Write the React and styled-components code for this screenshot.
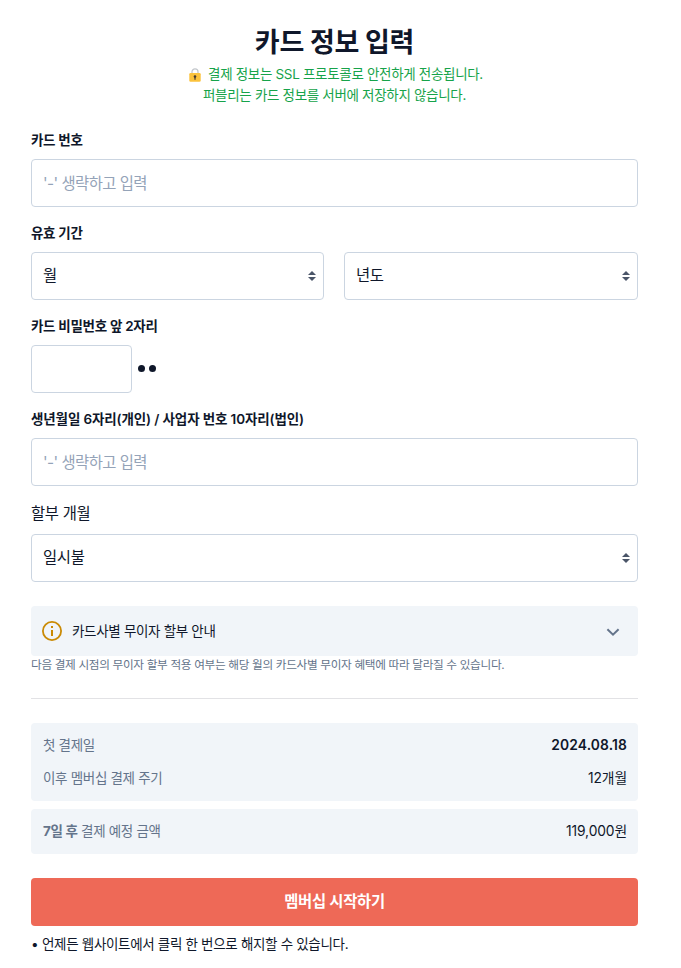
import React, { useState } from "react";
import { styled, createGlobalStyle } from "styled-components";

const App = () => {
  const [cardNumber, setCardNumber] = useState("");
  const [password, setPassword] = useState("");
  const [identity, setIdentity] = useState("");

  return (
    <>
      <GlobalStyle />
      <Wrapper>
        <Title>카드 정보 입력</Title>
        <Secure>
          <SecureLine $icon>
            <LockIcon />
            결제 정보는 SSL 프로토콜로 안전하게 전송됩니다.
          </SecureLine>
          <SecureLine>퍼블리는 카드 정보를 서버에 저장하지 않습니다.</SecureLine>
        </Secure>

        <Form>
          <Field>
            <Label>카드 번호</Label>
            <Input
              placeholder="'-' 생략하고 입력"
              value={cardNumber}
              onChange={(e) => setCardNumber(e.target.value)}
            />
          </Field>

          <Field>
            <Label>유효 기간</Label>
            <Columns>
              <SelectBox options={["월"]} />
              <SelectBox options={["년도"]} />
            </Columns>
          </Field>

          <Field>
            <Label>카드 비밀번호 앞 2자리</Label>
            <PasswordRow>
              <Input
                type="password"
                $width="101px"
                maxLength={2}
                value={password}
                onChange={(e) => setPassword(e.target.value)}
              />
              <Dot />
              <Dot />
            </PasswordRow>
          </Field>

          <Field>
            <Label $wide>생년월일 6자리(개인) / 사업자 번호 10자리(법인)</Label>
            <Input
              placeholder="'-' 생략하고 입력"
              value={identity}
              onChange={(e) => setIdentity(e.target.value)}
            />
          </Field>

          <Field>
            <Label $large>할부 개월</Label>
            <SelectBox options={["일시불"]} />
          </Field>
        </Form>

        <Guide type="button">
          <InfoIcon />
          <GuideText>카드사별 무이자 할부 안내</GuideText>
          <ChevronIcon />
        </Guide>
        <Note>
          다음 결제 시점의 무이자 할부 적용 여부는 해당 월의 카드사별 무이자
          혜택에 따라 달라질 수 있습니다.
        </Note>

        <Divider />

        <Summary>
          <Row>
            <RowName>첫 결제일</RowName>
            <RowValue $bold>2024.08.18</RowValue>
          </Row>
          <Row>
            <RowName>이후 멤버십 결제 주기</RowName>
            <RowValue>12개월</RowValue>
          </Row>
        </Summary>
        <Summary>
          <Row>
            <RowName>
              <strong>7일 후</strong> 결제 예정 금액
            </RowName>
            <RowValue>119,000원</RowValue>
          </Row>
        </Summary>

        <Submit type="button">멤버십 시작하기</Submit>
        <Notices>
          <Notice>언제든 웹사이트에서 클릭 한 번으로 해지할 수 있습니다.</Notice>
        </Notices>
      </Wrapper>
    </>
  );
};

const SelectBox = ({ options }) => (
  <SelectWrapper>
    <Select>
      {options.map((option) => (
        <option key={option}>{option}</option>
      ))}
    </Select>
    <SelectArrow viewBox="0 0 8 10">
      <path d="M4 0 8 4H0Z M0 6H8L4 10Z" fill="#4a5568" />
    </SelectArrow>
  </SelectWrapper>
);

const LockIcon = () => (
  <Lock viewBox="0 0 12 14">
    <path
      d="M3 6.5V3.8a3 3 0 0 1 6 0v2.7"
      fill="none"
      stroke="#c3c7cc"
      strokeWidth="1.3"
    />
    <rect x="0.3" y="5" width="11.4" height="8.8" rx="1.3" fill="#fbc23c" />
    <circle cx="6" cy="8.5" r="1.3" fill="#43392f" />
    <path d="M5.4 9h1.2v2.7H5.4z" fill="#43392f" />
  </Lock>
);

const InfoIcon = () => (
  <svg width="20" height="20" viewBox="0 0 20 20">
    <circle
      cx="10"
      cy="10"
      r="9.1"
      fill="none"
      stroke="#ca8a04"
      strokeWidth="1.8"
    />
    <path d="M9 5h2v2H9z M9 9h2v6H9z" fill="#ca8a04" />
  </svg>
);

const ChevronIcon = () => (
  <svg width="14" height="12" viewBox="0 0 14 12">
    <path
      d="M1.4 4.2 7 9.6l5.6-5.4"
      fill="none"
      stroke="#64748b"
      strokeWidth="2"
    />
  </svg>
);

const GlobalStyle = createGlobalStyle`
  * {
    box-sizing: border-box;
  }

  body {
    margin: 0;
    background: #fff;
    color: #0f172a;
    font-family: Inter, "Noto Sans CJK KR", sans-serif;
    letter-spacing: -0.02em;
  }

  input, select, button {
    font-family: inherit;
    letter-spacing: inherit;
    color: inherit;
  }
`;

const Wrapper = styled.div`
  padding: 22px 43px 0 31px;
`;

const Title = styled.h1`
  margin: 0;
  font-size: 27px;
  font-weight: 700;
  line-height: 42px;
  text-align: center;
`;

const Secure = styled.div`
  margin-bottom: 24px;
  color: #16a34a;
  font-size: 13.5px;
  line-height: 21px;
`;

const SecureLine = styled.div`
  display: flex;
  align-items: center;
  justify-content: center;
  padding-left: ${({ $icon }) => ($icon ? "3px" : "0")};
`;

const Lock = styled.svg`
  width: 12px;
  height: 14px;
  margin-right: 7px;
`;

const Form = styled.div`
  display: flex;
  flex-direction: column;
  gap: 16px;
`;

const Field = styled.div`
  display: flex;
  flex-direction: column;
  gap: 8px;
`;

const Label = styled.label`
  font-size: ${({ $large }) => ($large ? "15.4px" : "13.5px")};
  font-weight: ${({ $large }) => ($large ? 400 : 600)};
  line-height: ${({ $large }) => ($large ? "24px" : "21px")};
  letter-spacing: ${({ $wide }) => ($wide ? "-0.009em" : "-0.022em")};
`;

const Input = styled.input`
  width: ${({ $width }) => $width || "100%"};
  height: 48px;
  padding: 0 11px;
  border: 1px solid #cbd5e1;
  border-radius: 4px;
  background: #fff;
  font-size: 15.4px;
  letter-spacing: -0.035em;
  outline: none;

  &::placeholder {
    color: #94a3b8;
  }
`;

const Columns = styled.div`
  display: grid;
  grid-template-columns: 293px 1fr;
  gap: 20px;
`;

const SelectWrapper = styled.div`
  position: relative;
`;

const Select = styled.select`
  display: block;
  width: 100%;
  height: 48px;
  padding: 0 11px 2px;
  border: 1px solid #cbd5e1;
  border-radius: 4px;
  background: #fff;
  font-size: 15.4px;
  appearance: none;
  outline: none;
`;

const SelectArrow = styled.svg`
  position: absolute;
  top: 19px;
  right: 8px;
  width: 8px;
  height: 10px;
  pointer-events: none;
`;

const PasswordRow = styled.div`
  display: flex;
  align-items: center;
  gap: 4px;

  input {
    margin-right: 2px;
  }
`;

const Dot = styled.span`
  width: 7px;
  height: 7px;
  margin-bottom: 1px;
  border-radius: 50%;
  background: #0f172a;
`;

const Guide = styled.button`
  display: flex;
  align-items: center;
  width: 100%;
  height: 50px;
  margin-top: 24px;
  padding: 0 18px 0 11px;
  border: 0;
  border-radius: 4px;
  background: #f1f5f9;
`;

const GuideText = styled.span`
  flex: 1;
  margin-left: 10px;
  padding-bottom: 2px;
  font-size: 13.5px;
  text-align: left;
`;

const Note = styled.p`
  margin: 0;
  color: #64748b;
  font-size: 11.65px;
  line-height: 18px;
  white-space: nowrap;
`;

const Divider = styled.hr`
  height: 1px;
  margin: 24px 0;
  border: 0;
  background: #e2e2e5;
`;

const Summary = styled.div`
  display: flex;
  flex-direction: column;
  gap: 12px;
  padding: 10px 11px 14px 12px;
  border-radius: 4px;
  background: #f1f5f9;

  & + & {
    margin-top: 8px;
  }
`;

const Row = styled.div`
  display: flex;
  align-items: center;
  justify-content: space-between;
  height: 21px;
  font-size: 13.5px;
`;

const RowName = styled.span`
  color: #64748b;
`;

const RowValue = styled.span`
  padding-top: ${({ $bold }) => ($bold ? "2px" : "0")};
  font-size: 13.8px;
  font-weight: ${({ $bold }) => ($bold ? 600 : 400)};
  letter-spacing: ${({ $bold }) => ($bold ? "0.01em" : "-0.008em")};
`;

const Submit = styled.button`
  display: block;
  width: 100%;
  height: 48px;
  margin-top: 24px;
  padding: 0 0 4px;
  border: 0;
  border-radius: 4px;
  background: #ee6957;
  color: #fff;
  font-size: 15.4px;
  font-weight: 600;
`;

const Notices = styled.ul`
  margin: 8px 0 0;
  padding: 0;
  list-style: none;
`;

const Notice = styled.li`
  display: flex;
  font-size: 13.5px;
  line-height: 21px;

  &::before {
    content: "•";
    width: 11px;
  }
`;

export default App;
